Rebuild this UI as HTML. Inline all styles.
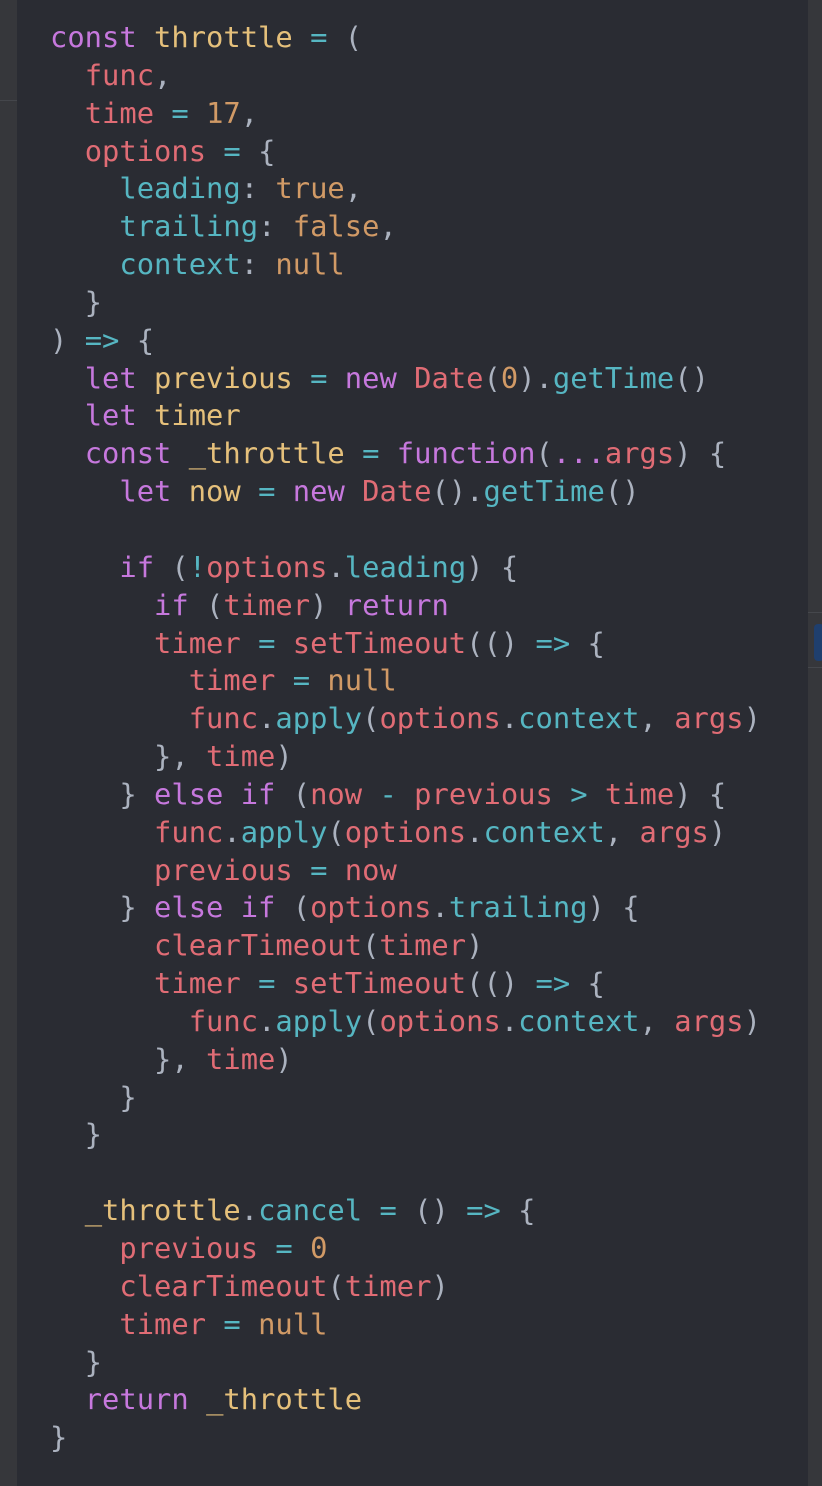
<!DOCTYPE html>
<html><head><meta charset="utf-8"><style>
html,body{margin:0;padding:0;width:822px;height:1486px;overflow:hidden;background:#2a2c33}
.l{position:absolute;left:0;top:0;width:17px;height:1486px;background:#36373b}
.l:after{content:"";position:absolute;left:0;top:100px;width:17px;height:1px;background:#44464b}
.r{position:absolute;left:808px;top:0;width:14px;height:1486px;background:#36373b}
.r .a{position:absolute;left:0;top:612px;width:14px;height:1px;background:#45474c}
.r .b{position:absolute;left:0;top:667px;width:14px;height:1px;background:#45474c}
.r .t{position:absolute;left:6px;top:624px;width:10px;height:37px;background:#1f3f6e;border-radius:4px}
pre{position:absolute;left:50px;top:19px;margin:0;font-family:"DejaVu Sans Mono","Liberation Mono",monospace;font-size:28.8px;line-height:37.84px;color:#abb2bf}
.k{color:#c678dd}.y{color:#e5c07b}.r1{color:#e06c75}.c{color:#56b6c2}.o{color:#d19a66}
</style></head><body>
<div class="l"></div>
<div class="r"><div class="a"></div><div class="t"></div><div class="b"></div></div>
<pre><span class="k">const</span> <span class="y">throttle</span> <span class="c">=</span> (
  <span class="r1">func</span>,
  <span class="r1">time</span> <span class="c">=</span> <span class="o">17</span>,
  <span class="r1">options</span> <span class="c">=</span> {
    <span class="c">leading</span>: <span class="o">true</span>,
    <span class="c">trailing</span>: <span class="o">false</span>,
    <span class="c">context</span>: <span class="o">null</span>
  }
) <span class="c">=&gt;</span> {
  <span class="k">let</span> <span class="y">previous</span> <span class="c">=</span> <span class="k">new</span> <span class="r1">Date</span>(<span class="o">0</span>).<span class="c">getTime</span>()
  <span class="k">let</span> <span class="y">timer</span>
  <span class="k">const</span> <span class="y">_throttle</span> <span class="c">=</span> <span class="k">function</span>(<span class="k">...</span><span class="r1">args</span>) {
    <span class="k">let</span> <span class="y">now</span> <span class="c">=</span> <span class="k">new</span> <span class="r1">Date</span>().<span class="c">getTime</span>()

    <span class="k">if</span> (<span class="c">!</span><span class="r1">options</span>.<span class="c">leading</span>) {
      <span class="k">if</span> (<span class="r1">timer</span>) <span class="k">return</span>
      <span class="r1">timer</span> <span class="c">=</span> <span class="r1">setTimeout</span>(() <span class="c">=&gt;</span> {
        <span class="r1">timer</span> <span class="c">=</span> <span class="o">null</span>
        <span class="r1">func</span>.<span class="c">apply</span>(<span class="r1">options</span>.<span class="c">context</span>, <span class="r1">args</span>)
      }, <span class="r1">time</span>)
    } <span class="k">else if</span> (<span class="r1">now</span> <span class="c">-</span> <span class="r1">previous</span> <span class="c">&gt;</span> <span class="r1">time</span>) {
      <span class="r1">func</span>.<span class="c">apply</span>(<span class="r1">options</span>.<span class="c">context</span>, <span class="r1">args</span>)
      <span class="r1">previous</span> <span class="c">=</span> <span class="r1">now</span>
    } <span class="k">else if</span> (<span class="r1">options</span>.<span class="c">trailing</span>) {
      <span class="r1">clearTimeout</span>(<span class="r1">timer</span>)
      <span class="r1">timer</span> <span class="c">=</span> <span class="r1">setTimeout</span>(() <span class="c">=&gt;</span> {
        <span class="r1">func</span>.<span class="c">apply</span>(<span class="r1">options</span>.<span class="c">context</span>, <span class="r1">args</span>)
      }, <span class="r1">time</span>)
    }
  }

  <span class="y">_throttle</span>.<span class="c">cancel</span> <span class="c">=</span> () <span class="c">=&gt;</span> {
    <span class="r1">previous</span> <span class="c">=</span> <span class="o">0</span>
    <span class="r1">clearTimeout</span>(<span class="r1">timer</span>)
    <span class="r1">timer</span> <span class="c">=</span> <span class="o">null</span>
  }
  <span class="k">return</span> <span class="y">_throttle</span>
}</pre>
</body></html>
